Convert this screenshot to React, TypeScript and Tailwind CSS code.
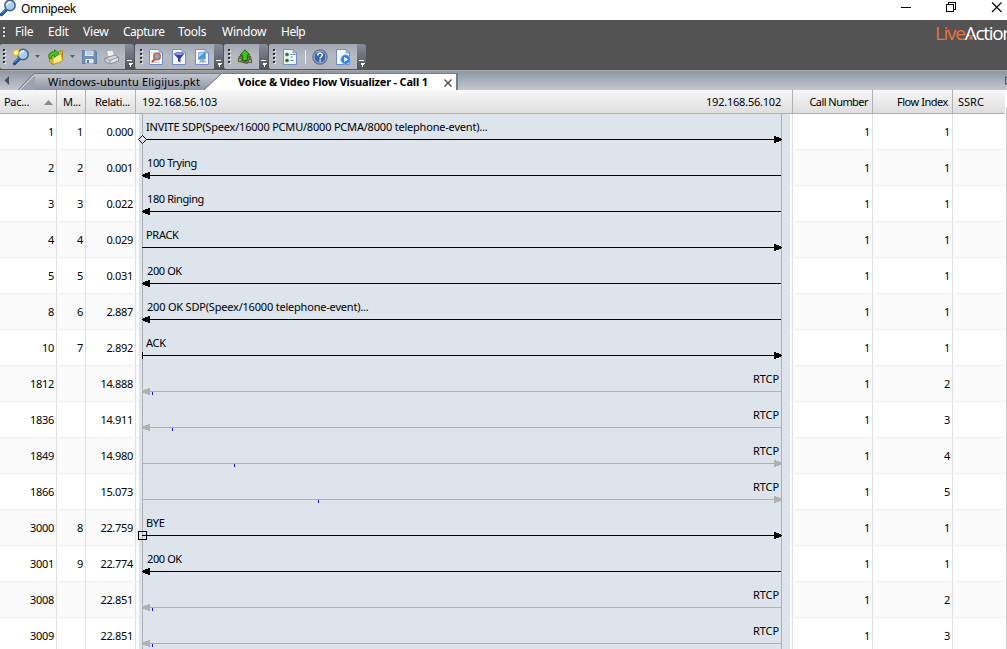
import React from "react";

const UI = "font-['Noto_Sans',sans-serif]";

type Kind = "diamond" | "square" | "tick" | "none";
type Row = {
  pkt: string;
  msg: string;
  time: string;
  label: string;
  dir: "l" | "r";
  flow: string;
  start?: Kind;
  blue?: number;
};

const rows: Row[] = [
  { pkt: "1", msg: "1", time: "0.000", label: "INVITE SDP(Speex/16000 PCMU/8000 PCMA/8000 telephone-event)...", dir: "r", flow: "1", start: "diamond" },
  { pkt: "2", msg: "2", time: "0.001", label: "100 Trying", dir: "l", flow: "1" },
  { pkt: "3", msg: "3", time: "0.022", label: "180 Ringing", dir: "l", flow: "1" },
  { pkt: "4", msg: "4", time: "0.029", label: "PRACK", dir: "r", flow: "1" },
  { pkt: "5", msg: "5", time: "0.031", label: "200 OK", dir: "l", flow: "1" },
  { pkt: "8", msg: "6", time: "2.887", label: "200 OK SDP(Speex/16000 telephone-event)...", dir: "l", flow: "1" },
  { pkt: "10", msg: "7", time: "2.892", label: "ACK", dir: "r", flow: "1", start: "tick" },
  { pkt: "1812", msg: "", time: "14.888", label: "RTCP", dir: "l", flow: "2", blue: 16 },
  { pkt: "1836", msg: "", time: "14.911", label: "RTCP", dir: "l", flow: "3", blue: 36 },
  { pkt: "1849", msg: "", time: "14.980", label: "RTCP", dir: "r", flow: "4", blue: 98 },
  { pkt: "1866", msg: "", time: "15.073", label: "RTCP", dir: "r", flow: "5", blue: 182 },
  { pkt: "3000", msg: "8", time: "22.759", label: "BYE", dir: "r", flow: "1", start: "square" },
  { pkt: "3001", msg: "9", time: "22.774", label: "200 OK", dir: "l", flow: "1" },
  { pkt: "3008", msg: "", time: "22.851", label: "RTCP", dir: "l", flow: "2", blue: 16 },
  { pkt: "3009", msg: "", time: "22.851", label: "RTCP", dir: "l", flow: "3", blue: 16 },
];

function Arrow({ row }: { row: Row }) {
  const media = row.blue !== undefined;
  const c = media ? "#b0b0b0" : "#000";
  return (
    <svg className="absolute inset-0" width="656" height="36" shapeRendering="crispEdges">
      <rect x="6" y="0" width="1" height="36" fill="#adb0b4" />
      <rect x="645" y="0" width="1" height="36" fill="#adb0b4" />
      <rect x="6" y="25" width="639" height="1" fill={c} />
      {row.dir === "r" ? (
        <path d="M638 22h2v1h3v1h2v1h1v1h-1v1h-2v1h-3v1h-2z" fill={c} />
      ) : (
        <path d="M14 22h-2v1h-3v1h-2v1h-1v1h1v1h2v1h3v1h2z" fill={c} />
      )}
      {media && <rect x={row.blue} y="26" width="1" height="3" fill="#2010f0" />}
      {row.start === "tick" && <rect x="6" y="22" width="1" height="7" fill="#000" />}
      {row.start === "square" && (
        <>
          <rect x="2.5" y="21.5" width="8" height="8" fill="#dde4ec" stroke="#000" />
          <rect x="6" y="22" width="1" height="7" fill="#adb0b4" />
          <rect x="6" y="25" width="6" height="1" fill="#000" />
        </>
      )}
      {row.start === "diamond" && (
        <path d="M6.500 21.500L10.500 25.500L6.500 29.500L2.500 25.500Z" fill="#dde4ec" stroke="#000" shapeRendering="auto" />
      )}
    </svg>
  );
}

function FlowRow({ row, odd }: { row: Row; odd: boolean }) {
  const cell = "h-full shrink-0 border-r border-b border-r-[#e0e0e0] border-b-[#f0f0f0] text-right leading-[36px] pr-[2px]";
  const media = row.blue !== undefined;
  const long = row.label.length > 20;
  const track = long ? "tracking-[-0.2px]" : media ? "tracking-[-0.1px]" : row.dir === "l" ? "tracking-[-0.4px]" : "tracking-[-0.3px]";
  return (
    <div className={`flex h-9 w-full shrink-0 ${odd ? "bg-[#fafafa]" : "bg-white"}`}>
      <div className={`${cell} w-[57px]`}>{row.pkt}</div>
      <div className={`${cell} w-[29px]`}>{row.msg}</div>
      <div className={`${cell} w-[50px]`}>{row.time}</div>
      <div className="relative h-full w-[656px] shrink-0">
        <div className="flex h-full">
          <div className="h-full w-[3px] border-b border-[#f0f0f0]" />
          <div className={`h-full w-[651px] bg-[#dde4ec] leading-[25px] ${track} ${media ? "pr-[11px] text-right" : row.dir === "r" ? "pl-[7px]" : "pl-[8px]"}`}>
            {row.label}
          </div>
          <div className="h-full w-[2px] border-b border-[#f0f0f0]" />
        </div>
        <Arrow row={row} />
      </div>
      <div className={`${cell} w-[81px] border-l border-l-[#e0e0e0]`}>1</div>
      <div className={`${cell} w-[80px]`}>{row.flow}</div>
      <div className="h-full w-[52px] shrink-0 border-b border-b-[#f0f0f0]" />
    </div>
  );
}

function Grip() {
  return (
    <svg width="4" height="15" shapeRendering="crispEdges" className="shrink-0">
      {[0, 4, 8, 12].map((y) => (
        <g key={y}>
          <rect x="1" y={y + 1} width="2" height="2" fill="#e8eaee" />
          <rect x="0" y={y} width="2" height="2" fill="#2b2d31" />
        </g>
      ))}
    </svg>
  );
}

function Overflow() {
  return (
    <div className="flex h-full w-[9px] shrink-0 items-end justify-center rounded-r-[3px] bg-linear-to-b from-[#858d99] to-[#50545b] pb-[2px]">
      <svg width="6" height="7" shapeRendering="crispEdges">
        <rect x="0" y="0" width="5" height="1" fill="#fff" />
        <path d="M2 3h4v1h-1v1h-1v2h-1v-2h-1z" fill="#fff" />
      </svg>
    </div>
  );
}

function Body({ className, children }: { className: string; children: React.ReactNode }) {
  return (
    <div className={`flex h-full shrink-0 items-center rounded-l-[2px] bg-linear-to-b from-[#a1a7b2] via-[#b6bac2] to-[#b0b5be] ${className}`}>
      {children}
    </div>
  );
}

function Drop() {
  return (
    <svg width="5" height="3" className="shrink-0">
      <path d="M0 0h5L2.500 3z" fill="#55585e" />
    </svg>
  );
}

function Magnifier({ star }: { star?: boolean }) {
  return (
    <svg width="18" height="18" viewBox="0 0 18 18" className="shrink-0">
      <path d="M7.500 10.500L2.500 15.500" stroke="#1b4b9c" strokeWidth="3.200" strokeLinecap="round" />
      <path d="M7 10.200L2.600 14.600" stroke="#7aa8e0" strokeWidth="1" />
      <circle cx="11" cy="6.500" r="5.200" fill="#a9cdf0" stroke="#47627f" strokeWidth="1.500" />
      <path d="M8 6.500a3 3 0 0 1 4-3" stroke="#fff" strokeWidth="1.400" fill="none" />
      <path d="M8.500 9.300a4 4 0 0 0 6.500-4.300c1 4.500-3 6.500-6.500 4.300z" fill="#3f84cf" />
      {star && (
        <path d="M4 0l.9 2.600L7.500 1.300 6.200 3.900 8.500 4.800 6 5.700 7 8 4.600 6.800 4 9.500 3.200 6.800.8 8 1.900 5.700-.2 4.900 1.900 3.900.8 1.400 3.200 2.700z" fill="#fff3a0" stroke="#d9a514" strokeWidth=".6" />
      )}
    </svg>
  );
}

function Page({ children }: { children: React.ReactNode }) {
  return (
    <svg width="16" height="18" viewBox="0 0 16 18" className="shrink-0">
      <path d="M1.500 1.500H11L14.500 5V16.500H1.500z" fill="#f4f8ff" stroke="#6f8ccb" />
      <path d="M11 1.500V5h3.500z" fill="#bccdec" stroke="#6f8ccb" strokeWidth=".7" />
      {children}
    </svg>
  );
}

function Toolbar() {
  return (
    <div className="flex h-[26px] bg-[#535353] pb-px">
      <Body className="w-[125px] pl-[3px]">
        <Grip />
        <div className="ml-[5px]"><Magnifier star /></div>
        <div className="ml-[5px] w-[5px]"><Drop /></div>
        <svg width="16" height="16" viewBox="0 0 16 16" className="ml-[8px] shrink-0">
          <path d="M1 5L5 3.500l3 1 5.500-3.500 1 1v9L5 15.500 1.500 13z" fill="#dcb92e" stroke="#9a7914" strokeWidth=".8" />
          <path d="M5 15.500V7.500L13.500 5l1 7z" fill="#ffec82" stroke="#b08d1c" strokeWidth=".8" />
          <path d="M1 9C0 4.500 3 2.500 6.500 2.800V.5L11 4.500 6.500 8.500V6C4.500 5.800 3.300 7 3.500 10z" fill="#45c522" stroke="#217a10" strokeWidth=".8" />
        </svg>
        <div className="ml-[6px] w-[5px]"><Drop /></div>
        <svg width="15" height="16" viewBox="0 0 15 16" className="ml-[7px] shrink-0">
          <path d="M.5 1.500H13L14.500 3V14.500H.5z" fill="#6f92ba" stroke="#5d7fa8" />
          <rect x="3" y="1.500" width="8.500" height="5.500" fill="#e4eaf2" />
          <path d="M4 3h6.500M4 5h6.500" stroke="#a9b7ca" />
          <rect x="3.500" y="10" width="8" height="4.500" fill="#dde5ee" />
          <rect x="5" y="11" width="2" height="3" fill="#57789f" />
        </svg>
        <svg width="16" height="16" viewBox="0 0 16 16" className="ml-[7px] shrink-0">
          <path d="M4 8L2.500 2l6-1L11 7z" fill="#eef0f4" stroke="#a0a4ac" strokeWidth=".8" />
          <path d="M1 9L11 6l3.500 2v4L6 15 1 12.500z" fill="#d3d6dc" stroke="#858992" strokeWidth=".9" />
          <path d="M1 9l5 2.500L14.500 8M6 11.500V15" stroke="#858992" fill="none" strokeWidth=".8" />
          <path d="M7.500 12.500l5-2" stroke="#f5f6f8" />
        </svg>
      </Body>
      <Overflow />
      <Body className="ml-px w-[79px] pl-[5px]">
        <Grip />
        <div className="ml-[4px]">
          <Page>
            <path d="M3 5h6M3 14.500h9" stroke="#c5d0e2" />
            <path d="M7.500 10.500L4 14" stroke="#c45120" strokeWidth="2.200" />
            <circle cx="9" cy="8.500" r="3.200" fill="#7fa9d8" stroke="#d0642f" strokeWidth="1.500" />
          </Page>
        </div>
        <div className="ml-[7px]">
          <Page>
            <path d="M3 6C5 4.500 11 4.500 13 6L9.500 10.500v4L7 13V10.500z" fill="#3040ae" />
            <ellipse cx="8" cy="6" rx="4.500" ry="1.300" fill="#a9b6f0" stroke="#2c338c" strokeWidth=".8" />
          </Page>
        </div>
        <div className="ml-[7px]">
          <Page>
            <path d="M4.500 4.500L11.500 4v7l-7 .5z" fill="#3f97e6" stroke="#9aabc2" />
            <path d="M5 5h5L5 9z" fill="#a6d7fb" />
            <path d="M7 11.500h3L12.500 14.500H4.500z" fill="#a0adbf" />
          </Page>
        </div>
      </Body>
      <Overflow />
      <Body className="ml-px w-[35px] pl-[4px]">
        <Grip />
        <svg width="16" height="16" viewBox="0 0 16 16" className="ml-[5px] shrink-0">
          <path d="M1 8l4-3 9 2 1 5-5 3-8-2z" fill="#696044" />
          <path d="M1 9h4v4H1zM11 10h4v4h-4z" fill="#404a3d" stroke="#a99b6a" strokeWidth=".6" />
          <path d="M8 .8L13 6h-2.700v5.500H5.700V6H3z" fill="#43c51c" stroke="#176a08" />
          <path d="M2 11h2M12 12h2" stroke="#a4d96b" strokeWidth="1.500" />
        </svg>
      </Body>
      <Overflow />
      <Body className="ml-px w-[88px] pl-[4px]">
        <Grip />
        <div className="ml-[5px]">
          <Page>
            <circle cx="5" cy="6.500" r="2" fill="#4db149" />
            <circle cx="5" cy="12.500" r="2" fill="#4db149" />
            <path d="M5 5v3M3.500 6.500h3M5 11v3M3.500 12.500h3" stroke="#18551d" strokeWidth=".7" />
            <path d="M8.500 6.500h2m1 0h2M8.500 9h2M8.500 12.500h3" stroke="#50709f" />
          </Page>
        </div>
        <div className="ml-[7px] h-[14px] w-px bg-[#f0f1f3]" />
        <svg width="16" height="16" viewBox="0 0 16 16" className="ml-[6px] shrink-0">
          <circle cx="8" cy="8" r="7.200" fill="#3c64ae" stroke="#6c7583" strokeWidth="1.200" />
          <circle cx="8" cy="8" r="6" fill="none" stroke="#c2cfe6" strokeWidth=".8" />
          <path d="M5.800 6.400C5.800 3.300 10.300 3.300 10.300 6c0 1.700-2.200 1.800-2.200 3.600M8.100 10.800v1.700" stroke="#fff" strokeWidth="1.500" fill="none" />
        </svg>
        <div className="ml-[7px]">
          <Page>
            <circle cx="10.500" cy="11.500" r="4.700" fill="#3483dc" stroke="#8bb6eb" strokeWidth=".7" />
            <path d="M9.200 9v5l4-2.500z" fill="#fff" />
          </Page>
        </div>
      </Body>
      <Overflow />
    </div>
  );
}

const menus: [string, string][] = [
  ["File", "w-[33px]"],
  ["Edit", "w-[35px]"],
  ["View", "w-[40px]"],
  ["Capture", "w-[55px] tracking-[-0.5px]"],
  ["Tools", "w-[44px]"],
  ["Window", "w-[59px]"],
  ["Help", "w-[40px] tracking-[-0.5px]"],
];

export default function App() {
  const head = "h-full shrink-0 border-r border-[#b0b0b0] leading-[23px] whitespace-nowrap";
  return (
    <div className={`flex h-[649px] w-[1007px] flex-col overflow-hidden bg-white text-black ${UI}`}>
      {/* Title bar */}
      <div className="flex h-5 shrink-0 items-start">
        <div className="-mt-[1px] -ml-[1px] h-[18px] w-[18px]"><Magnifier /></div>
        <div className="ml-[4px] text-[12px] leading-[18px] tracking-[-0.45px]">Omnipeek</div>
        <svg className="ml-auto" width="110" height="18" shapeRendering="crispEdges">
          <rect x="4" y="7" width="10" height="1" fill="#000" />
          <path d="M49.500 4.500h7v7h-7zM51.500 4.500v-2h7v7h-2" fill="none" stroke="#000" />
          <path d="M95 2.500l9.500 9.500M104.500 2.500L95 12" stroke="#000" strokeWidth="1.100" shapeRendering="auto" />
        </svg>
      </div>

      {/* Menu bar */}
      <div className="flex h-6 shrink-0 items-center bg-[#535353] pl-[3px] text-[12px] leading-6 tracking-[-0.2px] text-white">
        <svg width="2" height="11" shapeRendering="crispEdges" className="mr-[10px]">
          <path d="M0 0h2v2h-2zM0 4h2v2h-2zM0 8h2v2h-2z" fill="#d8d8d8" />
        </svg>
        {menus.map(([t, w]) => (
          <div key={t} className={`${w} shrink-0`}>{t}</div>
        ))}
        <div className="ml-auto flex h-6 w-[72px] overflow-hidden whitespace-nowrap font-['Open_Sans',sans-serif] text-[19px] leading-[26px] font-normal tracking-[-1.3px]">
          <span className="text-[#e9743a]">Live</span>
          <span className="relative">
            A
            <svg className="absolute top-[11px] left-[2px]" width="8" height="10">
              <path d="M3.900 0L7 9.500H.8z" fill="#535353" />
              <path d="M3.900 3.500L6.200 8.500H1.600z" fill="#e9743a" />
            </svg>
          </span>
          <span>ction</span>
        </div>
      </div>

      <Toolbar />

      {/* Document tabs */}
      <div className="flex h-5 shrink-0 items-end border-t border-[#a9a9a9] bg-linear-to-b from-[#8f97a4] to-[#c5c8ce] text-[11px]">
        <svg width="18" height="19" className="shrink-0">
          <path d="M9 5v9L4.500 9.500z" fill="#4b4e55" />
        </svg>
        <svg width="17" height="17" className="shrink-0">
          <path d="M0 17L17 0v17z" fill="#9da4b0" />
          <path d="M0 17L16 .5h1" stroke="#6f747d" fill="none" />
          <path d="M1.500 17L17 1.500" stroke="#e9ebef" fill="none" />
        </svg>
        <div className="flex h-[17px] w-[187px] shrink-0 justify-between rounded-tr-[3px] border-t border-[#777c85] bg-linear-to-b from-[#c3c7cf] to-[#8f97a4] pl-[13px] leading-[15px] tracking-[0.18px] whitespace-nowrap">
          <span>Windows-ubuntu Eligijus.pkt</span>
          <svg width="18" height="16" className="shrink-0">
            <path d="M0 16L18 -1v17z" fill="#fff" />
            <path d="M0 16L17.500 -.5" stroke="#6f747d" />
          </svg>
        </div>
        <div className="flex h-[17px] w-[236px] shrink-0 items-center border-t border-r-2 border-[#777c85] bg-white pl-[16px] leading-[15px] font-bold whitespace-nowrap">
          <span className="w-[206px] -translate-y-px tracking-[-0.19px]">Voice &amp; Video Flow Visualizer - Call 1</span>
          <svg width="8" height="8" className="mt-[2px] shrink-0">
            <path d="M.5 .5l7 7M7.500 .5l-7 7" stroke="#444" strokeWidth="1.300" />
          </svg>
        </div>
        <svg width="4" height="19" className="ml-auto">
          <path d="M2.500 5.500v8l5-4z" fill="none" stroke="#555" />
        </svg>
      </div>

      {/* Table */}
      <div className="flex min-h-0 flex-1 text-[11px] tracking-[-0.3px]">
        <div className="flex w-[1005px] shrink-0 flex-col overflow-hidden">
          <div className="flex h-6 shrink-0 border-b border-[#b0b0b0] bg-linear-to-b from-[#f8f8f8] to-[#dedede]">
            <div className={`${head} flex w-[57px] items-center justify-between pr-[3px] pl-[4px]`}>
              <span>Pac...</span>
              <svg width="9" height="5" className="mt-[2px]">
                <path d="M4.500 0L9 5H0z" fill="#8b8b8b" />
              </svg>
            </div>
            <div className={`${head} w-[29px] pl-[6px]`}>M...</div>
            <div className={`${head} w-[50px] pl-[9px]`}>Relati...</div>
            <div className={`${head} flex w-[657px] justify-between pr-[11px] pl-[6px] tracking-[-0.22px]`}>
              <span>192.168.56.103</span>
              <span>192.168.56.102</span>
            </div>
            <div className={`${head} w-[80px] pr-[4px] text-right tracking-[-0.55px]`}>Call Number</div>
            <div className={`${head} w-[80px] pr-[4px] text-right tracking-[-0.45px]`}>Flow Index</div>
            <div className="pl-[5px] leading-[23px] tracking-[0px]">SSRC</div>
          </div>
          {rows.map((r, i) => (
            <FlowRow key={i} row={r} odd={i % 2 === 1} />
          ))}
        </div>
        <div className="mt-[17px] ml-[1px] w-px bg-[#c8c8c8]" />
      </div>
    </div>
  );
}
